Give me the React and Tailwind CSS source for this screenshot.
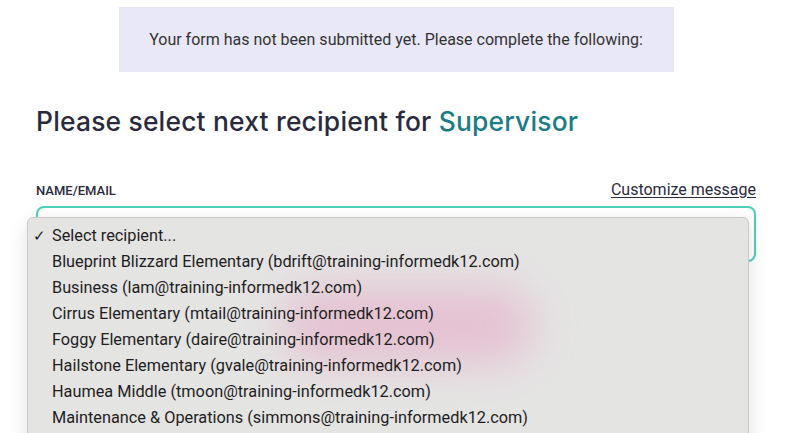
import { useState } from "react";

const recipients = [
  "Blueprint Blizzard Elementary (bdrift@training-informedk12.com)",
  "Business (lam@training-informedk12.com)",
  "Cirrus Elementary (mtail@training-informedk12.com)",
  "Foggy Elementary (daire@training-informedk12.com)",
  "Hailstone Elementary (gvale@training-informedk12.com)",
  "Haumea Middle (tmoon@training-informedk12.com)",
  "Maintenance & Operations (simmons@training-informedk12.com)",
];

export default function App() {
  const [selected, setSelected] = useState(null);

  return (
    <div className="relative h-[433px] w-[808px] overflow-hidden bg-white font-['Roboto',sans-serif] text-[#2b2a3d]">
      <div className="ml-[36px] mr-[52px] flex flex-col">
        <div className="mx-auto mt-[7px] flex h-[65px] w-[555px] items-center justify-center bg-[#e9e8f8] text-[16px] text-[#333333]">
          Your form has not been submitted yet. Please complete the following:
        </div>

        <h1 className="mt-[32px] font-['Inter',sans-serif] text-[26.4px] font-medium leading-[34px] tracking-[0.2px] text-[#2b2a3d]">
          Please select next recipient for <span className="text-[#1b7c86]">Supervisor</span>
        </h1>

        <div className="mt-[42px] flex items-end justify-between">
          <label className="text-[13px] font-medium uppercase text-[#2b2a3d]">Name/Email</label>
          <a href="#" className="text-[16px] leading-[20px] text-[#2b2a3d] underline underline-offset-2">
            Customize message
          </a>
        </div>

        <div className="mt-[6px] h-[56px] rounded-[8px] border-2 border-[#4fd1b9] bg-white" />
      </div>

      {/* open native-style dropdown */}
      <div className="absolute left-[27px] top-[217px] w-[722px] rounded-[6px] border border-[#c9c9c9] bg-[#e4e4e3] pt-[5px] font-['Roboto',sans-serif] text-[16.3px] text-[#1e1e1e] shadow-[0_6px_20px_rgba(0,0,0,0.12)]">
        <div className="pointer-events-none absolute left-[255px] top-[70px] h-[75px] w-[250px] rounded-full bg-[#e6a9c6] opacity-60 blur-[22px]" />
        <ul className="relative pb-[20px]">
          <li className="flex h-[26px] items-center">
            <span className="w-[24px] pl-[5px] text-[15px] font-medium">✓</span>
            Select recipient...
          </li>
          {recipients.map((r) => (
            <li
              key={r}
              onClick={() => setSelected(r)}
              className={`flex h-[26px] items-center pl-[24px] ${selected === r ? "bg-[#d0d0d0]" : ""}`}
            >
              {r}
            </li>
          ))}
        </ul>
      </div>
    </div>
  );
}
